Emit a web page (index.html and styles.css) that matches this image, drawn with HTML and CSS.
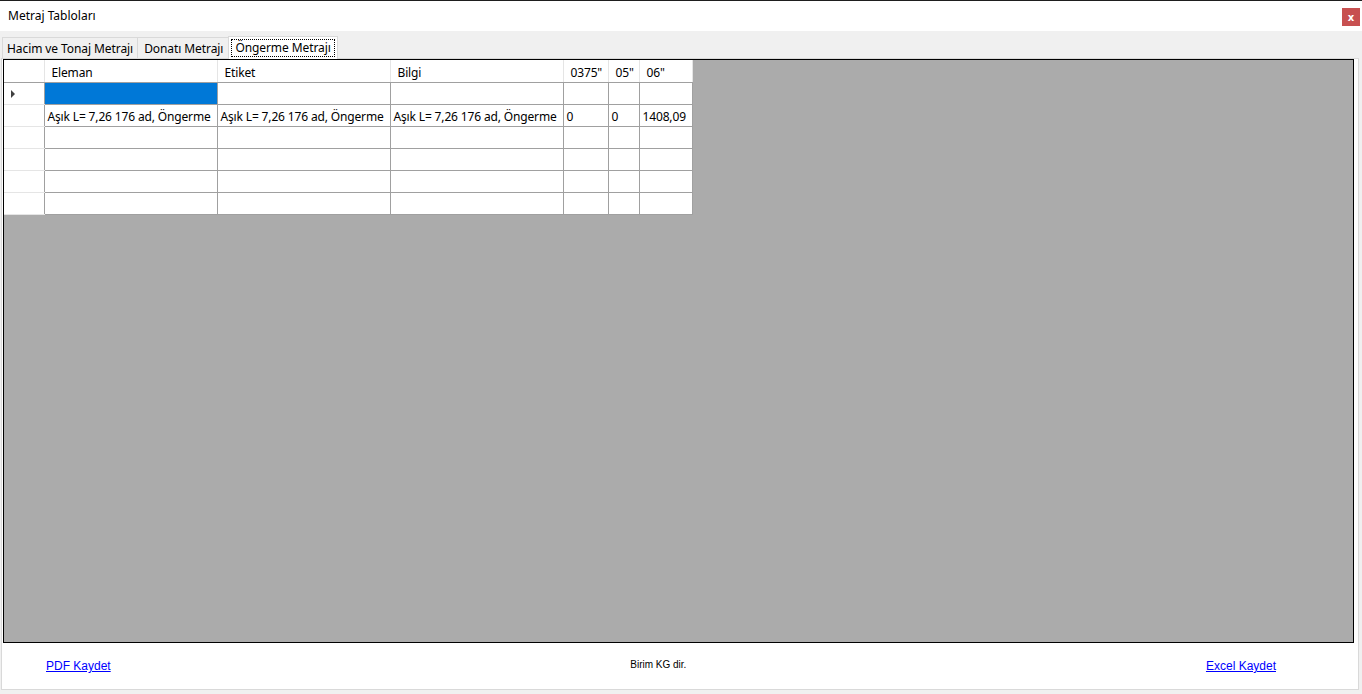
FILE: index.html
```html
<!DOCTYPE html>
<html lang="tr">
<head>
    <meta charset="UTF-8">
    <title>Metraj Tabloları</title>
    <link rel="stylesheet" href="styles.css">
</head>
<body>
    <div class="window">
        <div class="titlebar">
            <span class="title">Metraj Tabloları</span>
            <span class="close">x</span>
        </div>
        <div class="tabs">
            <div class="tab">Hacim ve Tonaj Metrajı</div>
            <div class="tab">Donatı Metrajı</div>
            <div class="tab active"><span class="focus">Öngerme Metrajı</span></div>
        </div>
        <div class="tabpage">
            <div class="gridview">
                <table>
                    <colgroup>
                        <col class="w-head">
                        <col class="w-wide">
                        <col class="w-wide">
                        <col class="w-wide">
                        <col class="w-a">
                        <col class="w-b">
                        <col class="w-c">
                    </colgroup>
                    <thead>
                        <tr>
                            <th class="rowhead"></th>
                            <th>Eleman</th>
                            <th>Etiket</th>
                            <th>Bilgi</th>
                            <th>0375"</th>
                            <th>05"</th>
                            <th>06"</th>
                        </tr>
                    </thead>
                    <tbody>
                        <tr>
                            <td class="rowhead"><span class="arrow"></span></td>
                            <td class="selected"></td>
                            <td></td>
                            <td></td>
                            <td></td>
                            <td></td>
                            <td></td>
                        </tr>
                        <tr>
                            <td class="rowhead"></td>
                            <td>Aşık L= 7,26 176 ad, Öngerme</td>
                            <td>Aşık L= 7,26 176 ad, Öngerme</td>
                            <td>Aşık L= 7,26 176 ad, Öngerme</td>
                            <td>0</td>
                            <td>0</td>
                            <td>1408,09</td>
                        </tr>
                        <tr><td class="rowhead"></td><td></td><td></td><td></td><td></td><td></td><td></td></tr>
                        <tr><td class="rowhead"></td><td></td><td></td><td></td><td></td><td></td><td></td></tr>
                        <tr><td class="rowhead"></td><td></td><td></td><td></td><td></td><td></td><td></td></tr>
                        <tr><td class="rowhead"></td><td></td><td></td><td></td><td></td><td></td><td></td></tr>
                    </tbody>
                </table>
            </div>
            <div class="footer">
                <a href="#" class="link">PDF Kaydet</a>
                <span class="note">Birim KG dir.</span>
                <a href="#" class="link">Excel Kaydet</a>
            </div>
        </div>
    </div>
</body>
</html>
```

FILE: styles.css
```css
body {
    margin: 0;
    background-color: #f0f0f0;
    font-family: 'Noto Sans', 'Open Sans', sans-serif;
    font-size: 12px;
    color: #000;
    overflow: hidden;
}
.window {
    width: 1362px;
    height: 694px;
    display: flex;
    flex-direction: column;
}
.titlebar {
    height: 30px;
    border-top: 1px solid #1e1e1e;
    background: #fff;
    display: flex;
    align-items: center;
    justify-content: space-between;
    padding: 0 2px 0 8px;
}
.title {
    font-size: 12px;
    margin-top: -2px;
}
.close {
    width: 18px;
    height: 18px;
    margin-top: 2px;
    background: #c75050;
    color: #fff;
    font-family: 'DejaVu Sans', sans-serif;
    font-weight: bold;
    font-size: 10px;
    display: flex;
    align-items: center;
    justify-content: center;
}
.tabs {
    display: flex;
    align-items: flex-end;
    padding: 4px 0 0 2px;
    height: 23px;
    letter-spacing: -0.08px;
}
.tab {
    height: 20px;
    padding: 0 4px;
    border: 1px solid #d9d9d9;
    border-bottom: none;
    margin-right: -1px;
    background: #f0f0f0;
    display: flex;
    align-items: center;
    font-size: 12px;
}
.tab:nth-child(2) {
    padding: 0 5px 0 6px;
}
.tab.active {
    height: 22px;
    background: #fff;
    padding: 0 2px;
    position: relative;
    z-index: 1;
    margin-bottom: -1px;
}
.focus {
    border: 1px dotted #000;
    padding: 0 3px;
    line-height: 16px;
}
.tabpage {
    flex: 1;
    margin: 0 3px 4px 1px;
    border: 1px solid #d9d9d9;
    background: #fff;
    display: flex;
    flex-direction: column;
    padding: 0 4px 0 1px;
}
.gridview {
    height: 582px;
    border: 1px solid #000;
    background: #ababab;
    overflow: hidden;
}
table {
    width: 648px;
    border-collapse: collapse;
    table-layout: fixed;
    background: #fff;
    letter-spacing: -0.15px;
}
.w-head { width: 40px; }
.w-wide { width: 173px; }
.w-a { width: 45px; }
.w-b { width: 31px; }
.w-c { width: 53px; }
th, td {
    height: 19px;
    padding: 2px 0 0 3px;
    border: 1px solid #a0a0a0;
    text-align: left;
    vertical-align: middle;
    line-height: 19px;
    font-weight: normal;
    white-space: nowrap;
    overflow: hidden;
    font-size: 12px;
}
th {
    height: 20px;
    padding-left: 7px;
    border-top: none;
    border-left-color: #e5e5e5;
    border-right-color: #e5e5e5;
}
tr > :first-child {
    border-left: none;
}
.rowhead {
    padding: 0;
    height: 21px;
    border-top-color: #e5e5e5;
    border-bottom-color: #e5e5e5;
    border-right-color: #a0a0a0;
}
th.rowhead {
    height: 22px;
    border-bottom-color: #a0a0a0;
    border-right-color: #e5e5e5;
}
.selected {
    background: #0078d7;
}
.arrow {
    display: block;
    width: 0;
    height: 0;
    margin-left: 7px;
    margin-top: 1px;
    border-top: 4px solid transparent;
    border-bottom: 4px solid transparent;
    border-left: 4px solid #404040;
}
.footer {
    flex: 1;
    display: flex;
    align-items: center;
    justify-content: space-between;
    padding: 0 78px 0 43px;
    font-family: 'Liberation Sans', sans-serif;
    font-size: 10px;
}
.link {
    color: #0000ff;
    font-size: 12px;
}
.note {
    color: #000;
    margin-left: 0;
    margin-bottom: 4px;
}
```
